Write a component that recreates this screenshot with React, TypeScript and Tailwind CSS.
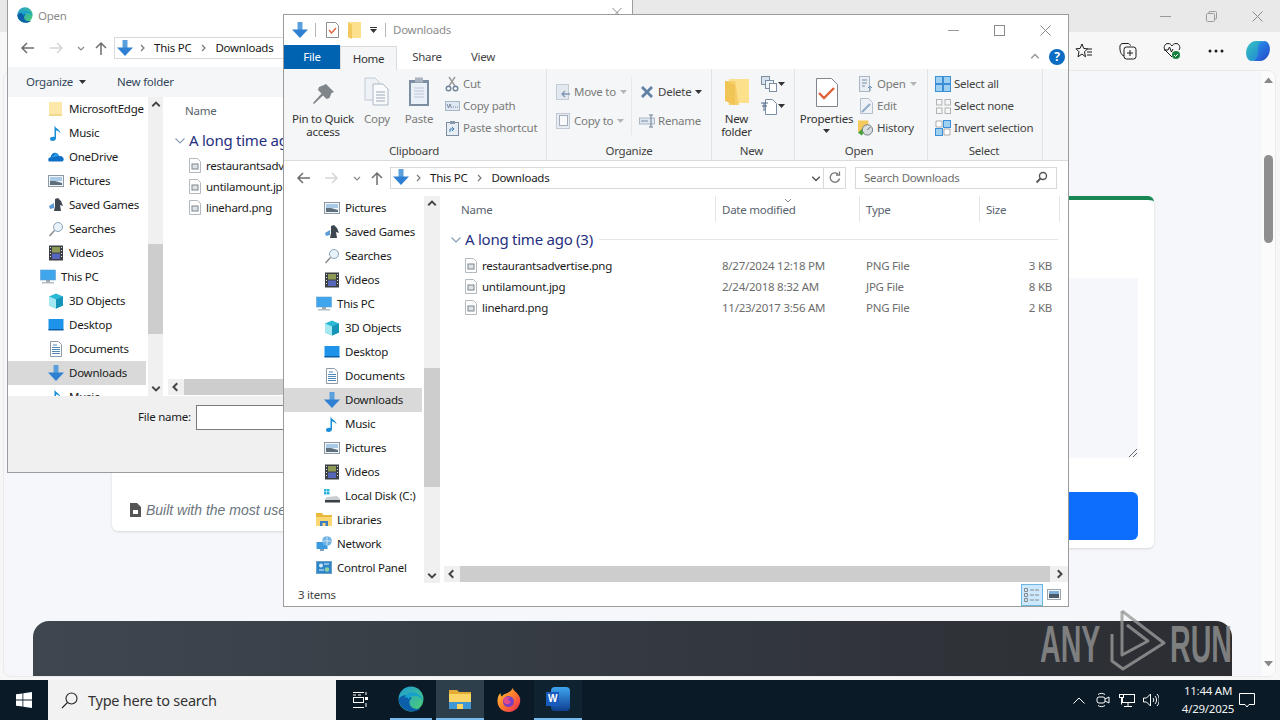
import React from 'react';

type IconName = 'pictures' | 'games' | 'searches' | 'videos' | 'pc' | 'cube' | 'desktop' | 'docs' | 'downloads' | 'music' | 'disk' | 'libraries' | 'network' | 'panel' | 'folder' | 'onedrive';

const NavIcon: React.FC<{ name: IconName }> = ({ name }) => {
  switch (name) {
    case 'pictures':
      return (
        <svg width="16" height="16" viewBox="0 0 16 16">
          <rect x="0.5" y="2.5" width="15" height="11" fill="#f4f7fa" stroke="#8d9aa6" />
          <rect x="2" y="4" width="12" height="4" fill="#a9cbe8" />
          <path d="M2 8l5 0 7 2v2H2z" fill="#5d6f7c" />
        </svg>
      );
    case 'games':
      return (
        <svg width="16" height="16" viewBox="0 0 16 16">
          <path d="M1 9l5-3v5l-4 1z" fill="#5b9bd8" />
          <path d="M7 2l3-1 3 3 2 5-3-1 1 6H6l1-5z" fill="#3e4650" />
        </svg>
      );
    case 'searches':
      return (
        <svg width="16" height="16" viewBox="0 0 16 16" fill="none">
          <circle cx="10" cy="6" r="4.5" fill="#e8f2fb" stroke="#8ba3b8" />
          <path d="M6.5 9.5L1.5 15" stroke="#8b8f94" strokeWidth="1.6" />
        </svg>
      );
    case 'videos':
      return (
        <svg width="16" height="16" viewBox="0 0 16 16">
          <rect x="1" y="0.5" width="14" height="15" fill="#3a3f45" />
          <rect x="4" y="2" width="8" height="5.5" fill="#8d9a55" />
          <rect x="4" y="8.5" width="8" height="5.5" fill="#5566bb" />
          <path d="M2 2h1v1H2zM2 5h1v1H2zM2 8h1v1H2zM2 11h1v1H2zM13 2h1v1h-1zM13 5h1v1h-1zM13 8h1v1h-1zM13 11h1v1h-1z" fill="#ddd" />
        </svg>
      );
    case 'pc':
      return (
        <svg width="16" height="16" viewBox="0 0 16 16">
          <rect x="0.5" y="1" width="15" height="10" fill="#3fa6ee" stroke="#5f9fd0" strokeWidth="0.6" />
          <rect x="6" y="11" width="4" height="2" fill="#9aa6b0" />
          <rect x="2" y="13" width="12" height="1.5" fill="#b4bcc4" />
        </svg>
      );
    case 'cube':
      return (
        <svg width="16" height="16" viewBox="0 0 16 16">
          <path d="M8 0.5l7 3v9l-7 3-7-3v-9z" fill="#2bb8d4" />
          <path d="M1 3.5l7 3v9l-7-3z" fill="#a4e9f2" />
          <path d="M8 6.5l7-3v9l-7 3z" fill="#1593b8" />
        </svg>
      );
    case 'desktop':
      return (
        <svg width="16" height="16" viewBox="0 0 16 16">
          <rect x="0.5" y="2" width="15" height="11" fill="#1d94ea" />
          <rect x="0.5" y="12" width="15" height="1.5" fill="#0d5fa5" />
        </svg>
      );
    case 'docs':
      return (
        <svg width="16" height="16" viewBox="0 0 16 16" fill="none">
          <path d="M2.5 0.5h8l3 3v12h-11z" fill="#fff" stroke="#8d9aa6" />
          <path d="M5 4h4M4 6.5h8M4 8.5h8M4 10.5h8M4 12.5h8" stroke="#4f87b8" />
        </svg>
      );
    case 'downloads':
      return (
        <svg width="16" height="17" viewBox="0 0 16 17">
          <rect x="5.5" y="0" width="5" height="8" fill="#5b9fdc" />
          <path d="M0 7.5h16L8 16z" fill="#2f80d2" />
        </svg>
      );
    case 'music':
      return (
        <svg width="16" height="16" viewBox="0 0 16 16">
          <path d="M6.5 0.5c1 3 6 4 6 8-1-2-3-3-4.500-3v7.500c0 1.800-1.500 3-3.500 3-1.600 0-2.500-.8-2.500-2 0-1.500 1.800-2.500 4.500-2z" fill="#1b8ed8" />
        </svg>
      );
    case 'disk':
      return (
        <svg width="16" height="16" viewBox="0 0 16 16">
          <path d="M0 1h2.500v2.500H0zM3 1h2.500v2.500H3zM0 4h2.500v2.500H0zM3 4h2.500v2.500H3z" fill="#26b4dc" />
          <path d="M3 9l10-1 3 3v3H1v-3z" fill="#c9ced3" />
          <rect x="1" y="12" width="15" height="2.500" fill="#3a4046" />
        </svg>
      );
    case 'libraries':
      return (
        <svg width="16" height="16" viewBox="0 0 16 16">
          <path d="M0 1h6l1.500 2H16v11H0z" fill="#e7b93e" />
          <path d="M0 5h16v9H0z" fill="#fbd872" />
          <path d="M4 9h8v5H9.500v-3h-3v3H4z" fill="#3f7fc1" />
        </svg>
      );
    case 'network':
      return (
        <svg width="16" height="16" viewBox="0 0 16 16">
          <rect x="0.5" y="6" width="11" height="7" fill="#3c9be0" />
          <rect x="4" y="13" width="4" height="2" fill="#7f9db5" />
          <circle cx="11" cy="5" r="4.800" fill="#6fb3e3" />
          <path d="M6.500 5h9M11 0.500v9" stroke="#dcecf8" strokeWidth="0.8" />
        </svg>
      );
    case 'panel':
      return (
        <svg width="16" height="16" viewBox="0 0 16 16">
          <rect x="0.5" y="1.500" width="15" height="12" fill="#2d86c9" stroke="#6a9fc7" />
          <circle cx="5" cy="5.500" r="2" fill="#cfe9f7" />
          <circle cx="11" cy="9.500" r="2.200" fill="#8fd0a4" />
          <path d="M8 4h5M3 10h5" stroke="#e8f4fb" />
        </svg>
      );
    case 'folder':
      return (
        <svg width="16" height="16" viewBox="0 0 16 16">
          <rect x="1" y="1" width="13" height="14" fill="#fce9a9" />
          <rect x="1" y="13" width="13" height="2" fill="#f0d98e" />
        </svg>
      );
    case 'onedrive':
      return (
        <svg width="16" height="16" viewBox="0 0 16 16">
          <path d="M1 12.500c-1.500-1.600-.6-4 1.600-4.200C3 5.500 5.500 3.300 8 4c1.700.4 2.500 1.500 3 3 2.500-.5 4.700 1 4.700 3.200 0 1.400-1 2.300-2.200 2.300z" fill="#0f6fc6" />
          <path d="M3 8.500L8 4c1.700.4 2.500 1.500 3 3z" fill="#2b9be8" />
        </svg>
      );
  }
};

const Chevron: React.FC<{ dir: 'down' | 'right' | 'up' | 'left'; size?: number; color?: string; width?: number }> = ({ dir, size = 8, color = '#6d6d6d', width = 1.200 }) => {
  const paths = { down: 'M1 3l3 3 3-3', up: 'M1 5l3-3 3 3', right: 'M3 1l3 3-3 3', left: 'M5 1L2 4l3 3' };
  return (
    <svg width={size} height={size} viewBox="0 0 8 8" fill="none" className="shrink-0">
      <path d={paths[dir]} stroke={color} strokeWidth={width} />
    </svg>
  );
};

const Caret: React.FC<{ color?: string }> = ({ color = '#333' }) => (
  <svg width="7" height="4" viewBox="0 0 7 4" className="shrink-0">
    <path d="M0 0h7L3.500 4z" fill={color} />
  </svg>
);

const Arrow: React.FC<{ dir: 'left' | 'right' | 'up'; color: string }> = ({ dir, color }) => {
  const d = { left: 'M14 7H2M7 2L2 7l5 5', right: 'M0 7h12M7 2l5 5-5 5', up: 'M7 14V2M2 7l5-5 5 5' };
  return (
    <svg width="14" height="14" viewBox="0 0 14 14" fill="none" className="shrink-0">
      <path d={d[dir]} stroke={color} strokeWidth="1.500" />
    </svg>
  );
};

const FileIcon = () => (
  <svg width="12" height="15" viewBox="0 0 12 15" fill="none" className="shrink-0">
    <path d="M0.500 0.500h8l3 3v11h-11z" fill="#fdfdfd" stroke="#b4b9be" />
    <rect x="3" y="6" width="6" height="5" fill="#dfe3e6" stroke="#7d868e" />
  </svg>
);

const MagnifierSmall = () => (
  <svg width="13" height="13" viewBox="0 0 13 13" fill="none">
    <circle cx="8" cy="5" r="3.500" stroke="#555" strokeWidth="1.400" />
    <path d="M5.500 7.500L1.500 11.500" stroke="#555" strokeWidth="1.800" />
  </svg>
);

type NavItem = { icon: IconName; label: string; top?: boolean; selected?: boolean };

const NavRow: React.FC<NavItem> = ({ icon, label, top, selected }) => (
  <div className={`flex items-center h-6 shrink-0 ${top ? 'pl-[32px]' : 'pl-[40px]'} ${selected ? 'bg-[#d9d9d9] mr-[2px]' : ''}`}>
    <div className="w-4 h-4 mr-[5px] shrink-0 flex items-center justify-center">
      <NavIcon name={icon} />
    </div>
    <span className="whitespace-nowrap text-[#1a1a1a]">{label}</span>
  </div>
);

const VScroll: React.FC<{ thumbTop: number; thumbHeight: number }> = ({ thumbTop, thumbHeight }) => (
  <div className="w-4 shrink-0 bg-[#f0f0f0] flex flex-col items-center relative">
    <div className="h-4 flex items-center justify-center"><Chevron dir="up" size={10} color="#444" width={1.500} /></div>
    <div className="flex-1" />
    <div className="h-4 flex items-center justify-center"><Chevron dir="down" size={10} color="#444" width={1.500} /></div>
    <div className="absolute left-0 w-full bg-[#cdcdcd]" style={{ top: thumbTop, height: thumbHeight }} />
  </div>
);

const files = [
  { name: 'restaurantsadvertise.png', date: '8/27/2024 12:18 PM', type: 'PNG File', size: '3 KB' },
  { name: 'untilamount.jpg', date: '2/24/2018 8:32 AM', type: 'JPG File', size: '8 KB' },
  { name: 'linehard.png', date: '11/23/2017 3:56 AM', type: 'PNG File', size: '2 KB' },
];

const HeaderSep = () => <div className="absolute right-0 top-0 h-[26px] w-px bg-[#e5e5e5]" />;

const FileList: React.FC<{ compact?: boolean }> = ({ compact }) => (
  <div className="flex-1 min-h-0">
    <div className="grid grid-cols-[275px_144px_120px_80px] h-[26px] items-center">
      <div className="pl-5 pt-px relative h-full flex items-center"><span className="text-[#59636e]">Name</span><HeaderSep /></div>
      <div className="pl-[6px] pt-px relative h-full flex items-center">
        <span className="text-[#59636e]">Date modified</span>
        {!compact && <div className="absolute left-[68px] top-0"><Chevron dir="down" size={8} color="#8a8a8a" width={1} /></div>}
        <HeaderSep />
      </div>
      <div className="pl-[6px] pt-px relative h-full flex items-center"><span className="text-[#59636e]">Type</span><HeaderSep /></div>
      <div className="pl-[6px] pt-px relative h-full flex items-center"><span className="text-[#59636e]">Size</span><HeaderSep /></div>
    </div>
    <div className="flex items-center h-[24px] mt-[5px] pl-[9px]">
      <Chevron dir="down" size={12} color="#8aa0b8" width={0.800} />
      <span className="ml-[3px] text-[15px] leading-none text-[#1f2f80] whitespace-nowrap">A long time ago (3)</span>
      {!compact && <div className="ml-[6px] h-px w-[459px] bg-[#e2e5ea]" />}
    </div>
    <div className={compact ? 'mt-[3px]' : 'mt-[4px]'}>
      {files.map(f => (
        <div key={f.name} className="grid grid-cols-[275px_144px_120px_80px] h-[21px] items-center">
          <div className="pl-6 flex items-center gap-[5px] text-[#1a1a1a] whitespace-nowrap"><FileIcon />{f.name}</div>
          {!compact && <div className="pl-[6px] text-[#6d6d6d]">{f.date}</div>}
          {!compact && <div className="pl-[6px] text-[#6d6d6d]">{f.type}</div>}
          {!compact && <div className="pr-2 text-right text-[#6d6d6d]">{f.size}</div>}
        </div>
      ))}
    </div>
  </div>
);

const RibbonSmall: React.FC<{ icon: React.ReactNode; label: string; caret?: boolean; muted?: boolean; h?: string }> = ({ icon, label, caret, muted, h = 'h-[22px]' }) => (
  <div className={`flex items-center ${h} shrink-0 whitespace-nowrap ${muted ? 'text-[#7a7a7a]' : 'text-[#444]'}`}>
    <div className="w-[16px] h-[16px] mr-[3px] flex items-center justify-center shrink-0">{icon}</div>
    <span>{label}</span>
    {caret && <span className="ml-[4px]"><Caret color="#b5b5b5" /></span>}
  </div>
);

const RibbonGroup: React.FC<{ width: string; label: string; labelPad?: string; children: React.ReactNode }> = ({ width, label, labelPad = '', children }) => (
  <div className={`${width} shrink-0 flex flex-col border-r border-[#e1e3e6]`}>
    <div className="h-[74px] flex pt-[4px]">{children}</div>
    <div className={`h-[16px] text-center text-[#444] leading-[16px] ${labelPad}`}>{label}</div>
  </div>
);

const LargeBtn: React.FC<{ icon: React.ReactNode; lines: string[]; width: string; muted?: boolean; caret?: boolean }> = ({ icon, lines, width, muted, caret }) => (
  <div className={`${width} shrink-0 flex flex-col items-center ${muted ? 'text-[#7a7a7a]' : 'text-[#333]'}`}>
    <div className="h-[34px] flex items-end justify-center">{icon}</div>
    <div className="leading-[13px] text-center whitespace-nowrap mt-[5px]">
      {lines.map(l => <div key={l}>{l}</div>)}
    </div>
    {caret && <div className="mt-[4px]"><Caret /></div>}
  </div>
);

const PaleFolder: React.FC<{ w?: number; h?: number }> = ({ w = 13, h = 17 }) => (
  <svg width={w} height={h} viewBox="0 0 13 17">
    <rect x="0" y="0" width="13" height="16" fill="#fde08c" />
    <path d="M0 0l4 3v14L0 15z" fill="#f3c95f" />
  </svg>
);

const Ribbon = () => (
  <div className="flex h-[92px] bg-[#f5f6f7] border-b border-[#dadbdc] shrink-0">
    <RibbonGroup width="w-[263px]" label="Clipboard" labelPad="pr-[2px]">
      <div className="w-2 shrink-0" />
      <LargeBtn width="w-[62px]" lines={['Pin to Quick', 'access']} icon={
        <svg width="24" height="24" viewBox="0 0 24 24"><path d="M15 1l8 8-2.500 1-2 5-3 1-3.500-3.500L3 21l-1-1 8.500-9.500L7 7l1-3 5-2z" fill="#7f858a" /></svg>
      } />
      <div className="w-1 shrink-0" />
      <LargeBtn width="w-[38px]" muted lines={['Copy']} icon={
        <svg width="26" height="30" viewBox="0 0 26 30" fill="none"><path d="M1 1h10l4 4v18H1z" fill="#eef2f7" stroke="#c2cad6" /><path d="M9 7h10l5 5v16H9z" fill="#f8fafc" stroke="#aeb8c6" /><path d="M12 15h9M12 18h9M12 21h9M12 24h9" stroke="#9da8b8" /></svg>
      } />
      <div className="w-1 shrink-0" />
      <LargeBtn width="w-[38px]" muted lines={['Paste']} icon={
        <svg width="22" height="30" viewBox="0 0 22 30" fill="none"><rect x="1" y="3" width="20" height="26" fill="#7d8ea3" /><rect x="3" y="6" width="16" height="21" fill="#eaf0f8" /><rect x="7" y="0.500" width="8" height="5" fill="#aab4c0" /><path d="M6 11h10M6 14h10M6 17h10M6 20h10" stroke="#bcc7d6" /></svg>
      } />
      <div className="w-[6px] shrink-0" />
      <div className="flex flex-col">
        <RibbonSmall muted label="Cut" icon={<svg width="14" height="16" viewBox="0 0 14 16" fill="none"><path d="M4 1l6 9M10 1L4 10" stroke="#9a9a9a" strokeWidth="1.400" /><circle cx="3.500" cy="12.500" r="2.300" stroke="#70859c" strokeWidth="1.400" /><circle cx="10.500" cy="12.500" r="2.300" stroke="#70859c" strokeWidth="1.400" /></svg>} />
        <RibbonSmall muted label="Copy path" icon={<svg width="15" height="10" viewBox="0 0 15 10"><rect x="0.500" y="0.500" width="14" height="9" fill="#dfe8f2" stroke="#a9b6c6" /><path d="M2 3l1.500 4L5 3l1.500 4M8 6h1M10 6h1M12 6h1" stroke="#7b8ca1" fill="none" /></svg>} />
        <RibbonSmall muted label="Paste shortcut" icon={<svg width="13" height="15" viewBox="0 0 13 15"><rect x="0.500" y="1.500" width="12" height="13" fill="#e6ecf4" stroke="#7d8ea3" /><rect x="4" y="0" width="5" height="3" fill="#8a97a8" /><path d="M4 11V8h4M6 6l2 2-2 2" stroke="#3f78ad" fill="none" /></svg>} />
      </div>
    </RibbonGroup>
    <RibbonGroup width="w-[165px]" label="Organize">
      <div className="pl-[8px] w-[85px] flex flex-col border-r border-[#e6e8ea] h-[58px] mt-[4px] shrink-0">
        <RibbonSmall muted caret h="h-[29px]" label="Move to" icon={<svg width="15" height="16" viewBox="0 0 15 16"><rect x="0.500" y="0.500" width="12" height="15" fill="#e3e8ef" stroke="#c2cad6" /><path d="M14 10H6M9 7l-3 3 3 3" stroke="#7f98b4" fill="none" strokeWidth="1.300" /></svg>} />
        <RibbonSmall muted caret h="h-[29px]" label="Copy to" icon={<svg width="15" height="16" viewBox="0 0 15 16" fill="none"><rect x="0.500" y="0.500" width="13" height="15" fill="#e9edf3" stroke="#c2cad6" /><rect x="3.500" y="2.500" width="8" height="10" fill="#f8f9fb" stroke="#a2adbc" /></svg>} />
      </div>
      <div className="pl-[7px] flex flex-col mt-[4px]">
        <div className="flex items-center h-[29px] text-[#444]">
          <div className="w-[16px] mr-[3px] flex justify-center"><svg width="14" height="14" viewBox="0 0 14 14"><path d="M2 2l10 10M12 2L2 12" stroke="#5f7fa5" strokeWidth="2.800" /></svg></div>
          <span>Delete</span><span className="ml-[4px]"><Caret /></span>
        </div>
        <RibbonSmall muted h="h-[29px]" label="Rename" icon={<svg width="16" height="14" viewBox="0 0 16 14" fill="none"><rect x="0.500" y="4" width="15" height="6" fill="#dfe8f2" stroke="#aab6c4" /><path d="M2 7h7" stroke="#7b8ca1" /><path d="M10 1h4M12 1v12M10 13h4" stroke="#6d7b8c" /></svg>} />
      </div>
    </RibbonGroup>
    <RibbonGroup width="w-[83px]" label="New" labelPad="pr-[3px]">
      <LargeBtn width="w-[49px]" lines={['New', 'folder']} icon={
        <svg width="24" height="28" viewBox="0 0 24 28"><path d="M4 0h20v24H4z" fill="#fde08c" /><path d="M0 2h10l4 24H4z" fill="#f6cf6a" /><path d="M0 2l10 4v20L0 22z" fill="#f1c456" /></svg>
      } />
      <div className="flex flex-col items-start gap-[2px] pt-[1px]">
        <div className="h-[20px] flex items-center gap-[1px]"><svg width="16" height="16" viewBox="0 0 16 16" fill="none"><rect x="0.500" y="0.500" width="8" height="8" fill="#d7e3ef" stroke="#7d8ea3" /><rect x="4.500" y="4.500" width="8" height="8" fill="#eef3f8" stroke="#7d8ea3" /><rect x="8.500" y="7.500" width="7" height="8" fill="#fff" stroke="#7d8ea3" /></svg><Caret /></div>
        <div className="h-[20px] flex items-center gap-[1px]"><svg width="16" height="17" viewBox="0 0 16 17" fill="none"><path d="M4.500 1.500h7l4 4v11h-11z" fill="#fff" stroke="#7d8ea3" /><path d="M0 5h7M1 8h5M3 5v8" stroke="#4f6b8a" /></svg><Caret /></div>
      </div>
    </RibbonGroup>
    <RibbonGroup width="w-[133px]" label="Open" labelPad="pr-[4px]">
      <div className="w-[4px] shrink-0" />
      <LargeBtn width="w-[55px]" caret lines={['Properties']} icon={
        <svg width="22" height="29" viewBox="0 0 22 29" fill="none"><path d="M0.500 0.500h15l6 6v22h-21z" fill="#fff" stroke="#7f868d" /><path d="M3 15l5 5 10-10" stroke="#e0603a" strokeWidth="2.400" /></svg>
      } />
      <div className="w-[4px] shrink-0" />
      <div className="flex flex-col">
        <RibbonSmall muted caret label="Open" icon={<svg width="14" height="16" viewBox="0 0 14 16" fill="none"><rect x="0.500" y="0.500" width="10" height="15" fill="#e9eef5" stroke="#a9b6c6" /><path d="M3 4h5M3 7h5M3 10h3" stroke="#7b8ca1" /><path d="M11 15v-5M9 12l2-2 2 2" stroke="#6a8fb5" /></svg>} />
        <RibbonSmall muted label="Edit" icon={<svg width="13" height="16" viewBox="0 0 13 16" fill="none"><path d="M0.500 0.500h8l4 4v11h-12z" fill="#eef2f7" stroke="#b6c0cd" /><path d="M2 14l8-8" stroke="#8faac7" strokeWidth="2" /></svg>} />
        <RibbonSmall label="History" icon={<svg width="17" height="16" viewBox="0 0 17 16"><rect x="0" y="0" width="11" height="12" fill="#f4c95d" /><circle cx="10" cy="10" r="5.500" fill="#d8dde2" stroke="#6f7a84" /><path d="M0 13l4-4 2 4-2 3z" fill="#4aa13d" /><path d="M10 10l3-3" stroke="#555" /></svg>} />
      </div>
    </RibbonGroup>
    <RibbonGroup width="w-[115px]" label="Select" labelPad="pr-[2px]">
      <div className="pl-[7px] flex flex-col">
        <RibbonSmall label="Select all" icon={<svg width="16" height="16" viewBox="0 0 16 16"><rect width="16" height="16" fill="#3a8fd6" /><path d="M1 1h6v6H1zM9 1h6v6H9zM1 9h6v6H1zM9 9h6v6H9z" fill="#9fd0f2" /></svg>} />
        <RibbonSmall label="Select none" icon={<svg width="15" height="15" viewBox="0 0 15 15" fill="none" stroke="#b3b3b3"><rect x="0.500" y="0.500" width="5.500" height="5.500" /><rect x="9" y="0.500" width="5.500" height="5.500" /><rect x="0.500" y="9" width="5.500" height="5.500" /><rect x="9" y="9" width="5.500" height="5.500" /></svg>} />
        <RibbonSmall label="Invert selection" icon={<svg width="16" height="16" viewBox="0 0 16 16"><path d="M8 0h8v8H8zM0 8h8v8H0z" fill="#3a8fd6" /><path d="M9 1h6v6H9zM1 9h6v6H1z" fill="#9fd0f2" /><path d="M1 1h6v6H1zM9 9h6v6H9z" fill="#fff" stroke="#a9a9a9" /></svg>} />
      </div>
    </RibbonGroup>
  </div>
);

const explorerNav: NavItem[] = [
  { icon: 'pictures', label: 'Pictures' },
  { icon: 'games', label: 'Saved Games' },
  { icon: 'searches', label: 'Searches' },
  { icon: 'videos', label: 'Videos' },
  { icon: 'pc', label: 'This PC', top: true },
  { icon: 'cube', label: '3D Objects' },
  { icon: 'desktop', label: 'Desktop' },
  { icon: 'docs', label: 'Documents' },
  { icon: 'downloads', label: 'Downloads', selected: true },
  { icon: 'music', label: 'Music' },
  { icon: 'pictures', label: 'Pictures' },
  { icon: 'videos', label: 'Videos' },
  { icon: 'disk', label: 'Local Disk (C:)' },
  { icon: 'libraries', label: 'Libraries', top: true },
  { icon: 'network', label: 'Network', top: true },
  { icon: 'panel', label: 'Control Panel', top: true },
];

const dialogNav: NavItem[] = [
  { icon: 'folder', label: 'MicrosoftEdge' },
  { icon: 'music', label: 'Music' },
  { icon: 'onedrive', label: 'OneDrive' },
  { icon: 'pictures', label: 'Pictures' },
  { icon: 'games', label: 'Saved Games' },
  { icon: 'searches', label: 'Searches' },
  { icon: 'videos', label: 'Videos' },
  { icon: 'pc', label: 'This PC', top: true },
  { icon: 'cube', label: '3D Objects' },
  { icon: 'desktop', label: 'Desktop' },
  { icon: 'docs', label: 'Documents' },
  { icon: 'downloads', label: 'Downloads', selected: true },
  { icon: 'music', label: 'Music' },
];

const Crumbs = () => (
  <>
    <div className="ml-[2px] w-[16px] flex justify-center"><NavIcon name="downloads" /></div>
    <div className="ml-[5px]"><Chevron dir="right" size={8} color="#777" /></div>
    <span className="ml-[8px] text-[#1a1a1a]">This PC</span>
    <div className="ml-[8px]"><Chevron dir="right" size={8} color="#777" /></div>
    <span className="ml-[8px] text-[#1a1a1a]">Downloads</span>
  </>
);

const ExplorerWindow = () => (
  <div className="absolute left-[283px] top-[14px] w-[786px] h-[593px] bg-white border border-[#9c9c9c] flex flex-col z-20">
    <div className="h-[30px] shrink-0 flex items-center relative">
      <div className="ml-[8px]"><NavIcon name="downloads" /></div>
      <div className="ml-[7px] w-px h-[14px] bg-[#b5b5b5]" />
      <div className="ml-[10px]"><svg width="13" height="16" viewBox="0 0 13 16" fill="none"><path d="M0.500 0.500h9l3 3v12h-12z" fill="#fff" stroke="#8a8f94" /><path d="M3 8l2.500 3L10 6" stroke="#e0603a" strokeWidth="1.400" /></svg></div>
      <div className="ml-[9px]"><PaleFolder /></div>
      <div className="ml-[9px] flex flex-col items-center gap-[1px]"><div className="w-[7px] h-px bg-[#333]" /><Caret /></div>
      <div className="ml-[8px] w-px h-[14px] bg-[#b5b5b5]" />
      <span className="ml-[7px] text-[#8c8c8c]">Downloads</span>
      <div className="flex-1" />
      <div className="w-[46px] flex justify-center"><svg width="11" height="11" viewBox="0 0 11 11"><path d="M0 5.500h11" stroke="#9a9a9a" /></svg></div>
      <div className="w-[46px] flex justify-center"><svg width="11" height="11" viewBox="0 0 11 11" fill="none"><rect x="0.500" y="0.500" width="10" height="10" stroke="#8a8a8a" /></svg></div>
      <div className="w-[46px] flex justify-center"><svg width="11" height="11" viewBox="0 0 11 11"><path d="M0.500 0.500l10 10M10.500 0.500l-10 10" stroke="#8a8a8a" /></svg></div>
    </div>
    <div className="h-[24px] shrink-0 flex items-stretch relative">
      <div className="w-[56px] bg-[#0063b1] text-white flex items-center justify-center">File</div>
      <div className="w-[57px] bg-[#f5f6f7] border-x border-t border-[#dadbdc] text-[#333] flex items-center justify-center relative top-px z-10">Home</div>
      <div className="w-[60px] text-[#444] flex items-center justify-center">Share</div>
      <div className="w-[52px] text-[#444] flex items-center justify-center">View</div>
      <div className="flex-1 flex items-center justify-end pr-[3px] gap-[9px]">
        <Chevron dir="up" size={10} color="#999" />
        <div className="w-4 h-4 rounded-full bg-[#0b6cc4] text-white flex items-center justify-center text-[12px] font-bold">?</div>
      </div>
    </div>
    <Ribbon />
    <div className="h-[35px] pb-[2px] shrink-0 flex items-center text-[#1a1a1a]">
      <div className="ml-[12px]"><Arrow dir="left" color="#6d6d6d" /></div>
      <div className="ml-[15px]"><Arrow dir="right" color="#d5d5d5" /></div>
      <div className="ml-[14px]"><Chevron dir="down" size={8} color="#888" /></div>
      <div className="ml-[9px]"><Arrow dir="up" color="#6d6d6d" /></div>
      <div className="ml-[6px] w-[456px] h-[22px] border border-[#d9d9d9] flex items-center">
        <Crumbs />
        <div className="flex-1" />
        <div className="mr-[2px]"><Chevron dir="down" size={10} color="#555" /></div>
        <div className="w-[22px] h-full border-l border-[#d9d9d9] flex items-center justify-center">
          <svg width="12" height="13" viewBox="0 0 12 13" fill="none"><path d="M10.500 7.500a4.700 4.700 0 1 1-1.500-4.500" stroke="#777" strokeWidth="1.300" /><path d="M10.500 0.500v3.500H7" stroke="#777" strokeWidth="1.300" /></svg>
        </div>
      </div>
      <div className="ml-[9px] w-[202px] h-[22px] border border-[#d9d9d9] flex items-center justify-between pl-2 pr-[8px]">
        <span className="text-[#6d6d6d]">Search Downloads</span>
        <MagnifierSmall />
      </div>
    </div>
    <div className="h-[387px] shrink-0 flex">
      <div className="w-[140px] shrink-0 overflow-hidden flex flex-col">
        {explorerNav.map((n, i) => <NavRow key={i} {...n} />)}
      </div>
      <VScroll thumbTop={172} thumbHeight={119} />
      <div className="flex-1 min-w-0 flex flex-col pl-px">
        <FileList />
        <div className="h-4 mb-px shrink-0 ml-[3px] flex bg-[#f0f0f0]">
          <div className="w-4 flex items-center justify-center"><Chevron dir="left" size={10} color="#444" width={1.600} /></div>
          <div className="flex-1 bg-[#cdcdcd]" />
          <div className="w-[18px] flex items-center justify-center"><Chevron dir="right" size={10} color="#444" width={1.600} /></div>
        </div>
      </div>
    </div>
    <div className="flex-1 flex items-center pl-[14px] text-[#444] relative">
      3 items
      <div className="flex-1" />
      <div className="w-[22px] h-[22px] bg-[#cce8ff] border border-[#6fb5e0] flex items-center justify-center">
        <svg width="16" height="14" viewBox="0 0 16 14" fill="none" stroke="#8a8a8a"><path d="M0.500 0.500h3v3h-3zM0.500 5.500h3v3h-3zM0.500 10.500h3v3h-3zM6 2h4M11 2h4M6 7h4M11 7h4M6 12h4M11 12h4" /></svg>
      </div>
      <div className="w-[22px] h-[22px] mr-[3px] flex items-center justify-center">
        <svg width="14" height="11" viewBox="0 0 14 11"><rect x="0.500" y="0.500" width="13" height="10" fill="#f5f7fa" stroke="#9aa4ad" /><rect x="2" y="2" width="10" height="3" fill="#7fb0da" /><rect x="2" y="5" width="10" height="4" fill="#4a5a68" /></svg>
      </div>
    </div>
  </div>
);

const EdgeLogo: React.FC<{ size: number; id: string }> = ({ size, id }) => (
  <svg width={size} height={size} viewBox="0 0 24 24">
    <defs>
      <linearGradient id={id} x1="0" y1="0" x2="1" y2="1"><stop offset="0" stopColor="#1d9bd8" /><stop offset="1" stopColor="#4fd070" /></linearGradient>
    </defs>
    <circle cx="12" cy="12" r="11.500" fill={`url(#${id})`} />
    <path d="M0.500 12C1 18 6 23.500 13 23.500c3 0 6-1 8-3-3 1-7 1-9-1.500-2-2.500-2-6 .5-7.500C10 8 4 7 .5 12z" fill="#0c5fa8" />
    <path d="M10 13c0-3 3-4.500 6-4s6 2 6.500 5c.8-3-3-8-9.500-8-3 0-6 2-7 5 1.500-1 3-1 4 2z" fill="#16a0d0" />
  </svg>
);

const OpenDialog = () => (
  <div className="absolute left-[7px] top-0 w-[626px] h-[473px] bg-white border border-[#9c9c9c] border-t-0 flex flex-col z-10">
    <div className="h-[32px] shrink-0 flex items-center relative">
      <div className="ml-[9px] mt-[-2px]"><EdgeLogo size={16} id="edgeSmall" /></div>
      <span className="ml-[5px] text-[#8c8c8c]">Open</span>
      <div className="absolute right-[9px] top-[8px]"><svg width="11" height="9" viewBox="0 0 11 9"><path d="M0.500 0l9 9M9.500 0l-9 9" stroke="#8a8a8a" /></svg></div>
    </div>
    <div className="h-[35px] pb-[3px] shrink-0 flex items-center">
      <div className="ml-[12px]"><Arrow dir="left" color="#6d6d6d" /></div>
      <div className="ml-[16px]"><Arrow dir="right" color="#d5d5d5" /></div>
      <div className="ml-[13px]"><Chevron dir="down" size={8} color="#888" /></div>
      <div className="ml-[9px]"><Arrow dir="up" color="#6d6d6d" /></div>
      <div className="ml-[6px] flex-1 h-[22px] mr-[8px] border border-[#d9d9d9] flex items-center"><Crumbs /></div>
    </div>
    <div className="h-[30px] pb-px shrink-0 bg-[#f5f6f7] flex items-center text-[#33475b]">
      <span className="ml-[18px]">Organize</span>
      <span className="ml-[6px]"><Caret /></span>
      <span className="ml-[31px]">New folder</span>
    </div>
    <div className="h-[299px] shrink-0 flex">
      <div className="w-[140px] shrink-0 overflow-hidden flex flex-col">
        {dialogNav.map((n, i) => <NavRow key={i} {...n} />)}
      </div>
      <div className="w-[15px] shrink-0 bg-[#f0f0f0] relative flex flex-col items-center">
        <div className="h-4 flex items-center"><Chevron dir="up" size={10} color="#444" width={1.500} /></div>
        <div className="flex-1" />
        <div className="h-4 flex items-center"><Chevron dir="down" size={10} color="#444" width={1.500} /></div>
        <div className="absolute left-0 w-full bg-[#cdcdcd] top-[147px] h-[90px]" />
      </div>
      <div className="flex-1 min-w-0 flex flex-col pl-[2px] overflow-hidden">
        <FileList compact />
        <div className="h-4 shrink-0 flex bg-[#f0f0f0] ml-[3px] mb-px">
          <div className="w-4 flex items-center justify-center"><Chevron dir="left" size={10} color="#444" width={1.600} /></div>
          <div className="flex-1 bg-[#cdcdcd]" />
        </div>
      </div>
    </div>
    <div className="flex-1 bg-[#f0f0f0] flex items-start pt-[9px]">
      <span className="ml-[130px] h-6 leading-6 text-[#1a1a1a]">File name:</span>
      <div className="ml-[5px] flex-1 mr-[10px] h-[25px] bg-white border border-[#7a7a7a]" />
    </div>
  </div>
);

const BrowserChrome = () => (
  <div className="h-[680px] shrink-0 flex flex-col bg-[#f7f7f7]">
    <div className="h-[32px] shrink-0 bg-[#e9e9e9] flex items-center justify-end">
      <div className="w-[46px] flex justify-center"><svg width="11" height="11" viewBox="0 0 11 11"><path d="M0 5.500h11" stroke="#9a9a9a" /></svg></div>
      <div className="w-[46px] flex justify-center"><svg width="11" height="11" viewBox="0 0 11 11" fill="none" stroke="#9a9a9a"><rect x="0.500" y="2.500" width="8" height="8" rx="1" /><path d="M3 2.500V1a.500.500 0 0 1 .500-.500h6a1 1 0 0 1 1 1V7.500a.500.500 0 0 1-.500.500H8.500" /></svg></div>
      <div className="w-[46px] flex justify-center"><svg width="11" height="11" viewBox="0 0 11 11"><path d="M0.500 0.500l10 10M10.500 0.500l-10 10" stroke="#8a8a8a" /></svg></div>
    </div>
    <div className="h-[38px] shrink-0 flex items-center justify-end">
      <div className="w-[44px] flex justify-center">
        <svg width="18" height="18" viewBox="0 0 18 18" fill="none" stroke="#1a1a1a"><path d="M7 2l1.800 4.500 3.700.3-3 3 1 5L7 12l-4 2.800 1-5-3-3 4-.3z" /><path d="M12 7h5M12 10h5M12 13h5" /></svg>
      </div>
      <div className="w-[44px] flex justify-center">
        <svg width="18" height="18" viewBox="0 0 18 18" fill="none" stroke="#1a1a1a"><path d="M5 14C2 13 .5 9 1 4c.2-1.500 1.500-2.500 3-2.500h5c1 0 2 .8 2.500 2" /><rect x="5" y="5" width="12" height="12" rx="2.500" /><path d="M11 8v6M8 11h6" /></svg>
      </div>
      <div className="w-[44px] flex justify-center">
        <svg width="18" height="18" viewBox="0 0 18 18" fill="none"><path d="M9 15L2 8C0 5 2 1.500 5 1.500 7 1.500 8 2.500 9 4c1-1.500 2-2.500 4-2.500 3 0 5 3.500 3 6.500" stroke="#1a1a1a" /><path d="M1 8h4l1.500-3 2 5L10 7" stroke="#1a1a1a" /><circle cx="13" cy="13" r="4" fill="#16803c" /><path d="M11 13l1.500 1.500L15 12" stroke="#fff" /></svg>
      </div>
      <div className="w-[44px] flex justify-center">
        <svg width="16" height="4" viewBox="0 0 16 4" fill="#1a1a1a"><circle cx="2" cy="2" r="1.500" /><circle cx="8" cy="2" r="1.500" /><circle cx="14" cy="2" r="1.500" /></svg>
      </div>
      <div className="w-[40px] mr-[2px] flex justify-center">
        <svg width="26" height="24" viewBox="0 0 24 24" preserveAspectRatio="none">
          <defs>
            <linearGradient id="cpA" x1="0" y1="0" x2="1" y2="1"><stop offset="0" stopColor="#38c5c0" /><stop offset="1" stopColor="#1d7fd6" /></linearGradient>
            <linearGradient id="cpB" x1="0" y1="0" x2="1" y2="1"><stop offset="0" stopColor="#2a9ff0" /><stop offset="1" stopColor="#2245c8" /></linearGradient>
          </defs>
          <path d="M1 14C1 8 5 2 10 2h7c-3 1-5 4-5 9v4c0 4-2 7-6 7-3 0-5-4-5-8z" fill="url(#cpA)" />
          <path d="M23 10c0 6-4 12-9 12H7c3-1 5-4 5-9V9c0-4 2-7 6-7 3 0 5 4 5 8z" fill="url(#cpB)" />
        </svg>
      </div>
    </div>
    <div className="flex-1 min-h-0 ml-[3px] mr-[4px] mb-[3px] rounded-lg bg-[#f5f7fa] border border-[#eaeaea] flex overflow-hidden">
      <div className="flex-1 min-w-0 flex flex-col">
        <div className="flex items-start ml-[108px] mt-[125px] w-[1042px] gap-[42px]">
          <div className="w-[500px] h-[335px] bg-white rounded-b-md shadow-sm flex items-end pb-[14px] pl-[18px]">
            <div className="flex items-center gap-[5px] text-[14px] italic tracking-normal text-[#6c757d] [font-family:'Liberation_Sans',sans-serif]">
              <svg width="11" height="14" viewBox="0 0 11 14"><path d="M0 0h7l4 4v10H0z" fill="#555" /><rect x="3" y="7" width="5" height="4" fill="#fff" /></svg>
              Built with the most used
            </div>
          </div>
          <div className="w-[500px] h-[352px] bg-white border-t-4 border-[#198754] rounded-md shadow-sm flex flex-col px-4">
            <div className="mt-[78px] h-[180px] bg-[#f5f7fa] relative">
              <div className="absolute right-[1px] bottom-[1px]"><svg width="8" height="8" viewBox="0 0 8 8"><path d="M0 8l8-8M4 8l4-4" stroke="#666" /></svg></div>
            </div>
            <div className="mt-[34px] h-[48px] bg-[#0d6efd] rounded-md" />
          </div>
        </div>
        <div className="flex-1" />
        <div className="ml-[29px] w-[1199px] h-[55px] rounded-t-[16px] bg-gradient-to-r from-[#3e4750] to-[#2b2d32]" />
      </div>
      <div className="w-[13px] shrink-0 bg-[#fbfbfb] flex flex-col items-center relative">
        <div className="mt-[6px]"><svg width="9" height="6" viewBox="0 0 9 6"><path d="M0 6l4.500-5.500L9 6z" fill="#888" /></svg></div>
        <div className="mt-[72px] w-[9px] h-[88px] rounded-full bg-[#8f8f8f]" />
        <div className="flex-1" />
        <div className="mb-[9px]"><svg width="9" height="6" viewBox="0 0 9 6"><path d="M0 0l4.500 5.500L9 0z" fill="#888" /></svg></div>
      </div>
    </div>
  </div>
);

const Watermark = () => (
  <div className="absolute left-[1040px] top-[608px] z-30 w-[200px] h-[66px] flex items-center text-[#8e8e8e]/85 font-bold tracking-normal [font-family:'Liberation_Sans',sans-serif] pointer-events-none">
    <span className="text-[52px] leading-none w-[62px] mt-[5px] origin-left scale-x-[0.55] whitespace-nowrap">ANY</span>
    <svg width="58" height="64" viewBox="0 0 58 64" fill="none" className="ml-[8px] shrink-0" stroke="#9a9a9a" strokeOpacity="0.8" strokeWidth="3" strokeLinejoin="round">
      <path d="M12 2v44l26-14L17 16" />
      <path d="M12 2l42 32-41 26-11-8V25" />
    </svg>
    <span className="ml-[2px] text-[52px] leading-none mt-[5px] origin-left scale-x-[0.55] whitespace-nowrap">RUN</span>
  </div>
);

const Taskbar = () => (
  <div className="h-[40px] shrink-0 bg-[#0a1a26] flex items-stretch text-white">
    <div className="w-[48px] flex items-center justify-center">
      <svg width="16" height="16" viewBox="0 0 16 16" fill="#fff"><path d="M0 2.300l6.500-.9v6.200H0zM7.300 1.300L16 0v7.600H7.300zM0 8.400h6.500v6.200L0 13.700zM7.300 8.400H16V16l-8.700-1.200z" /></svg>
    </div>
    <div className="w-[288px] bg-[#f2f2f2] flex items-center pl-[13px] text-[#333] text-[14.5px]">
      <svg width="17" height="17" viewBox="0 0 17 17" fill="none" stroke="#222" strokeWidth="1.100"><circle cx="10.500" cy="6.500" r="5.500" /><path d="M6.500 10.500L1 16" /></svg>
      <span className="ml-[10px]">Type here to search</span>
    </div>
    <div className="w-[48px] flex items-center justify-center">
      <svg width="16" height="18" viewBox="0 0 16 18" fill="none" stroke="#fff"><path d="M1 1.500h11M1 16.500h11M1 4h3M6 4h3" /><rect x="1.500" y="6.500" width="10" height="5" /><rect x="13" y="6" width="3" height="3" fill="#fff" stroke="none" /><path d="M14 1v3M14 12v4" /></svg>
    </div>
    <div className="w-[6px]" />
    <div className="w-[42px] flex items-center justify-center border-b-2 border-[#76b9ed]"><EdgeLogo size={26} id="edgeLarge" /></div>
    <div className="w-[48px] ml-[4px] bg-[#2d3f4b] flex items-center justify-center border-b-2 border-[#76b9ed]">
      <svg width="22" height="20" viewBox="0 0 22 20"><path d="M0 1h8l2 2h12v4H0z" fill="#e3ac35" /><rect y="5" width="22" height="15" fill="#fbd566" /><rect y="13" width="22" height="7" fill="#3f97d4" /><rect x="8" y="15" width="6" height="5" fill="#fbd566" /></svg>
    </div>
    <div className="w-[50px] flex items-center justify-center">
      <svg width="24" height="25" viewBox="0 0 24 25">
        <defs><linearGradient id="ffx" x1="0" y1="0" x2="1" y2="1"><stop offset="0" stopColor="#ffce3a" /><stop offset="0.500" stopColor="#ff7a2c" /><stop offset="1" stopColor="#e8215a" /></linearGradient></defs>
        <path d="M12 4c2-1 3-2.500 3.500-4 1 3 6 5 7.500 10 1.500 7-4 14-11 14S0 19 .5 12c.2-2.500 1-5 3-7 0 2 .5 3 1.500 3.500C6 6 9 6 12 4z" fill="url(#ffx)" />
        <circle cx="11.500" cy="13.500" r="5.500" fill="#7a3fc0" />
        <path d="M6 11c2-2 5-2.500 8-1-2 0-3 1-3 2 2 0 3 1 2 3-1 1.500-4 1.500-6 0z" fill="#e24a8a" />
      </svg>
    </div>
    <div className="w-[48px] bg-[#0e2230] flex items-center justify-center border-b-2 border-[#76b9ed]">
      <div className="relative w-[24px] h-[24px]">
        <div className="absolute left-[5px] top-0 w-[19px] h-[24px] rounded-sm bg-gradient-to-b from-[#41a5ee] to-[#103f91]" />
        <div className="absolute left-0 top-[5px] w-[13px] h-[14px] bg-[#185abd] text-white text-[10px] font-bold flex items-center justify-center [font-family:'Liberation_Sans',sans-serif]">W</div>
      </div>
    </div>
    <div className="flex-1" />
    <div className="flex items-center">
      <div className="w-[24px] flex justify-center"><svg width="12" height="7" viewBox="0 0 12 7" fill="none"><path d="M0.500 6.500l5.500-5.500 5.500 5.500" stroke="#fff" /></svg></div>
      <div className="w-[24px] flex justify-center"><svg width="14" height="16" viewBox="0 0 14 16" fill="none" stroke="#fff"><rect x="1" y="5" width="8" height="6" rx="2" /><path d="M9 7l4-2v6l-4-2M2 2.500c2-1.500 5-1.500 7 0M2 13.500c2 1.500 5 1.500 7 0" /></svg></div>
      <div className="w-[24px] flex justify-center"><svg width="16" height="15" viewBox="0 0 16 15" fill="none" stroke="#fff"><rect x="3.500" y="1.500" width="12" height="8" /><rect x="0.500" y="1.500" width="4" height="3" fill="#0a1a26" /><path d="M9 9.500v4M5 13.500h8M2.500 4.500v7" /></svg></div>
      <div className="w-[24px] flex justify-center"><svg width="16" height="14" viewBox="0 0 16 14" fill="none" stroke="#fff"><path d="M0.500 5h3l4-4v12l-4-4h-3z" /><path d="M10 5c1 1 1 3 0 4M12 3c2 2 2 6 0 8M14 1c3 3 3 9 0 12" /></svg></div>
      <div className="w-[62px] ml-[14px] leading-[18px] text-center text-[#f2f2f2] whitespace-nowrap">
        <div>11:44 AM</div>
        <div>4/29/2025</div>
      </div>
      <div className="w-[16px] mr-[25px] flex justify-center"><svg width="16" height="16" viewBox="0 0 16 16" fill="none" stroke="#fff"><path d="M0.500 1.500h15v11H10l-2 2.500-2-2.500H0.500z" /></svg></div>
    </div>
  </div>
);

export default function App() {
  return (
    <div className="relative w-[1280px] h-[720px] overflow-hidden flex flex-col text-[11.5px] tracking-[-0.25px] leading-none [font-family:'Noto_Sans',sans-serif]">
      <BrowserChrome />
      <Taskbar />
      <OpenDialog />
      <ExplorerWindow />
      <Watermark />
    </div>
  );
}
